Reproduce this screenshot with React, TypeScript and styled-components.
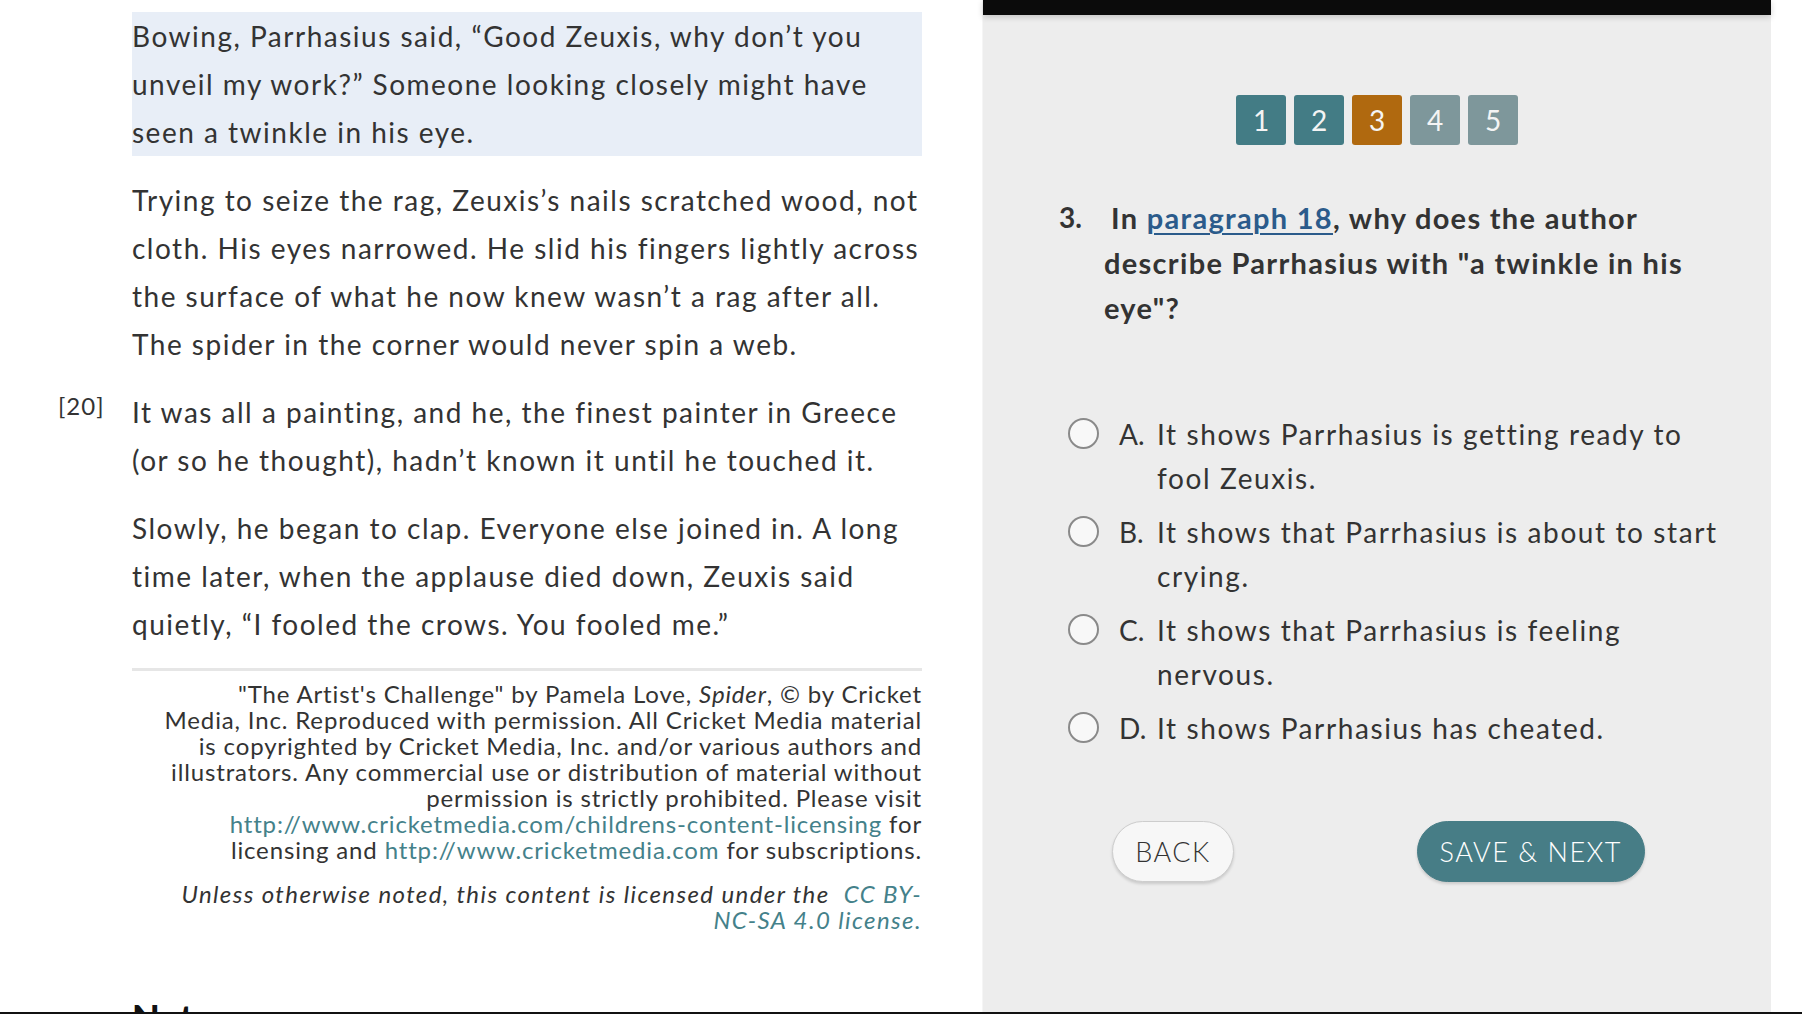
import React from "react";
import styled, { createGlobalStyle } from "styled-components";

const GlobalStyle = createGlobalStyle`
  html, body { margin: 0; padding: 0; height: 100%; overflow: hidden; background: #ffffff; }
  body { font-family: Lato, "Open Sans", "Liberation Sans", sans-serif; color: #333333; }
  #root { height: 100%; }
`;

const Frame = styled.div`
  display: flex;
  height: 100vh;
  box-sizing: border-box;
  border-bottom: 2px solid #111111;
  overflow: hidden;
`;

const ReadingPane = styled.section`
  width: 982px;
  flex: none;
  background: #ffffff;
  padding-top: 12px;
  box-sizing: border-box;
  overflow: hidden;
`;

const Article = styled.div`
  display: flex;
  flex-direction: column;
  gap: 20px;
`;

const ParaRow = styled.div`
  display: grid;
  grid-template-columns: 132px 790px;
`;

const ParaNumber = styled.span`
  padding-left: 58px;
  font-size: 24px;
  line-height: 36px;
  letter-spacing: 1px;
  color: #333333;
`;

const Para = styled.p<{ $highlight?: boolean }>`
  margin: 0;
  font-size: 28px;
  line-height: 48px;
  letter-spacing: 1.5px;
  white-space: nowrap;
  color: #333333;
  background: ${(p) => (p.$highlight ? "#e8eef7" : "transparent")};
`;

const Citation = styled.div`
  grid-column: 2;
  border-top: 3px solid #e6e6e6;
  padding-top: 10px;
  text-align: right;
  font-size: 24px;
  line-height: 26px;
  letter-spacing: 0.85px;
  color: #333333;
  white-space: nowrap;
`;

const License = styled.p`
  grid-column: 2;
  margin: 18px 0 0;
  text-align: right;
  font-size: 24px;
  line-height: 26px;
  letter-spacing: 1.4px;
  font-style: italic;
  white-space: nowrap;
  color: #333333;
`;

const TealLink = styled.a`
  color: #44818a;
  text-decoration: none;
`;

const NotesHeading = styled.h2`
  grid-column: 2;
  margin: 62px 0 0;
  font-size: 36px;
  line-height: 44px;
  font-weight: 900;
  color: #111111;
`;

const QuizPane = styled.section`
  width: 789px;
  flex: none;
  background: #ededed;
  border-left: 1px solid #f5f5f5;
  box-sizing: border-box;
  display: flex;
  flex-direction: column;
`;

const TopBar = styled.div`
  height: 15px;
  background: #0b0b0b;
  box-shadow: 0 2px 6px rgba(0, 0, 0, 0.18);
`;

const Pager = styled.nav`
  display: flex;
  justify-content: center;
  gap: 8px;
  margin-top: 80px;
`;

type PageState = "done" | "current" | "todo";

const pageColors: Record<PageState, string> = {
  done: "#437c85",
  current: "#b0690f",
  todo: "#7e979b",
};

const PageButton = styled.button<{ $state: PageState }>`
  width: 50px;
  height: 50px;
  border: none;
  border-radius: 3px;
  padding: 0;
  background: ${(p) => pageColors[p.$state]};
  color: #f4f4f4;
  font-family: Lato, sans-serif;
  font-size: 28px;
  line-height: 50px;
`;

const Question = styled.div`
  display: grid;
  grid-template-columns: 45px 627px;
  margin: 50px 0 0 76px;
  font-size: 29px;
  line-height: 45px;
  font-weight: 700;
  color: #333333;
`;

const QNumber = styled.span`
  font-size: 28px;
`;

const QText = styled.p`
  margin: 0;
  letter-spacing: 1.3px;
  &::before {
    content: "";
    display: inline-block;
    width: 7px;
  }
`;

const QLink = styled.a`
  color: #2b5b8b;
  text-decoration: underline;
  text-underline-offset: 4px;
  text-decoration-thickness: 2px;
`;

const Answers = styled.div`
  display: flex;
  flex-direction: column;
  gap: 10px;
  margin: 82px 0 0 85px;
`;

const AnswerRow = styled.label`
  display: grid;
  grid-template-columns: 30px 21px 38px 580px;
  font-size: 28px;
  line-height: 44px;
  letter-spacing: 1.6px;
  color: #333333;
`;

const Radio = styled.input`
  appearance: none;
  width: 31px;
  height: 31px;
  margin: 6px 0 0;
  border: 2.5px solid #8a8a8a;
  border-radius: 50%;
  background: #f8f8f8;
  box-sizing: border-box;
  grid-column: 1;
`;

const AnswerLetter = styled.span`
  grid-column: 3;
  letter-spacing: 0;
`;

const AnswerText = styled.span`
  grid-column: 4;
`;

const ButtonRow = styled.div`
  display: flex;
  justify-content: space-between;
  width: 533px;
  margin: 71px 0 0 129px;
`;

const PillButton = styled.button<{ $primary?: boolean }>`
  height: 61px;
  padding: 0 ${(p) => (p.$primary ? "22px" : "21px")};
  border-radius: 31px;
  border: 1px solid ${(p) => (p.$primary ? "#477d86" : "#cdcdcd")};
  background: ${(p) => (p.$primary ? "#477d86" : "#f7f7f7")};
  color: ${(p) => (p.$primary ? "#ffffff" : "#333333")};
  font-family: Lato, sans-serif;
  font-weight: 300;
  font-size: 27px;
  letter-spacing: 1.5px;
  box-shadow: 0 2px 3px rgba(0, 0, 0, 0.15);
  min-width: ${(p) => (p.$primary ? "225px" : "122px")};
`;

const answers = [
  { letter: "A.", text: "It shows Parrhasius is getting ready to fool Zeuxis." },
  { letter: "B.", text: "It shows that Parrhasius is about to start crying." },
  { letter: "C.", text: "It shows that Parrhasius is feeling nervous." },
  { letter: "D.", text: "It shows Parrhasius has cheated." },
];

const pages: { n: number; state: PageState }[] = [
  { n: 1, state: "done" },
  { n: 2, state: "done" },
  { n: 3, state: "current" },
  { n: 4, state: "todo" },
  { n: 5, state: "todo" },
];

export default function App() {
  return (
    <>
      <GlobalStyle />
      <Frame>
        <ReadingPane>
          <Article>
            <ParaRow>
              <span />
              <Para $highlight>
                Bowing, Parrhasius said, “Good Zeuxis, why don’t you
                <br />
                unveil my work?” Someone looking closely might have
                <br />
                seen a twinkle in his eye.
              </Para>
            </ParaRow>
            <ParaRow>
              <span />
              <Para>
                Trying to seize the rag, Zeuxis’s nails scratched wood, not
                <br />
                cloth. His eyes narrowed. He slid his fingers lightly across
                <br />
                the surface of what he now knew wasn’t a rag after all.
                <br />
                The spider in the corner would never spin a web.
              </Para>
            </ParaRow>
            <ParaRow>
              <ParaNumber>[20]</ParaNumber>
              <Para>
                It was all a painting, and he, the finest painter in Greece
                <br />
                (or so he thought), hadn’t known it until he touched it.
              </Para>
            </ParaRow>
            <ParaRow>
              <span />
              <Para>
                Slowly, he began to clap. Everyone else joined in. A long
                <br />
                time later, when the applause died down, Zeuxis said
                <br />
                quietly, “I fooled the crows. You fooled me.”
              </Para>
            </ParaRow>
            <ParaRow>
              <Citation>
                "The Artist's Challenge" by Pamela Love, <i>Spider</i>, © by Cricket
                <br />
                Media, Inc. Reproduced with permission. All Cricket Media material
                <br />
                is copyrighted by Cricket Media, Inc. and/or various authors and
                <br />
                illustrators. Any commercial use or distribution of material without
                <br />
                permission is strictly prohibited. Please visit
                <br />
                <TealLink href="#">http://www.cricketmedia.com/childrens-content-licensing</TealLink> for
                <br />
                licensing and <TealLink href="#">http://www.cricketmedia.com</TealLink> for subscriptions.
              </Citation>
              <License>
                Unless otherwise noted, this content is licensed under the&nbsp;{" "}
                <TealLink href="#">
                  CC BY-
                  <br />
                  NC-SA 4.0 license.
                </TealLink>
              </License>
              <NotesHeading>Notes</NotesHeading>
            </ParaRow>
          </Article>
        </ReadingPane>
        <QuizPane>
          <TopBar />
          <Pager>
            {pages.map((p) => (
              <PageButton key={p.n} $state={p.state}>
                {p.n}
              </PageButton>
            ))}
          </Pager>
          <Question>
            <QNumber>3.</QNumber>
            <QText>
              In <QLink href="#">paragraph 18</QLink>, why does the author describe Parrhasius with "a twinkle in his
              eye"?
            </QText>
          </Question>
          <Answers>
            {answers.map((a) => (
              <AnswerRow key={a.letter}>
                <Radio type="radio" name="answer" />
                <AnswerLetter>{a.letter}</AnswerLetter>
                <AnswerText>{a.text}</AnswerText>
              </AnswerRow>
            ))}
          </Answers>
          <ButtonRow>
            <PillButton>BACK</PillButton>
            <PillButton $primary>SAVE &amp; NEXT</PillButton>
          </ButtonRow>
        </QuizPane>
      </Frame>
    </>
  );
}
